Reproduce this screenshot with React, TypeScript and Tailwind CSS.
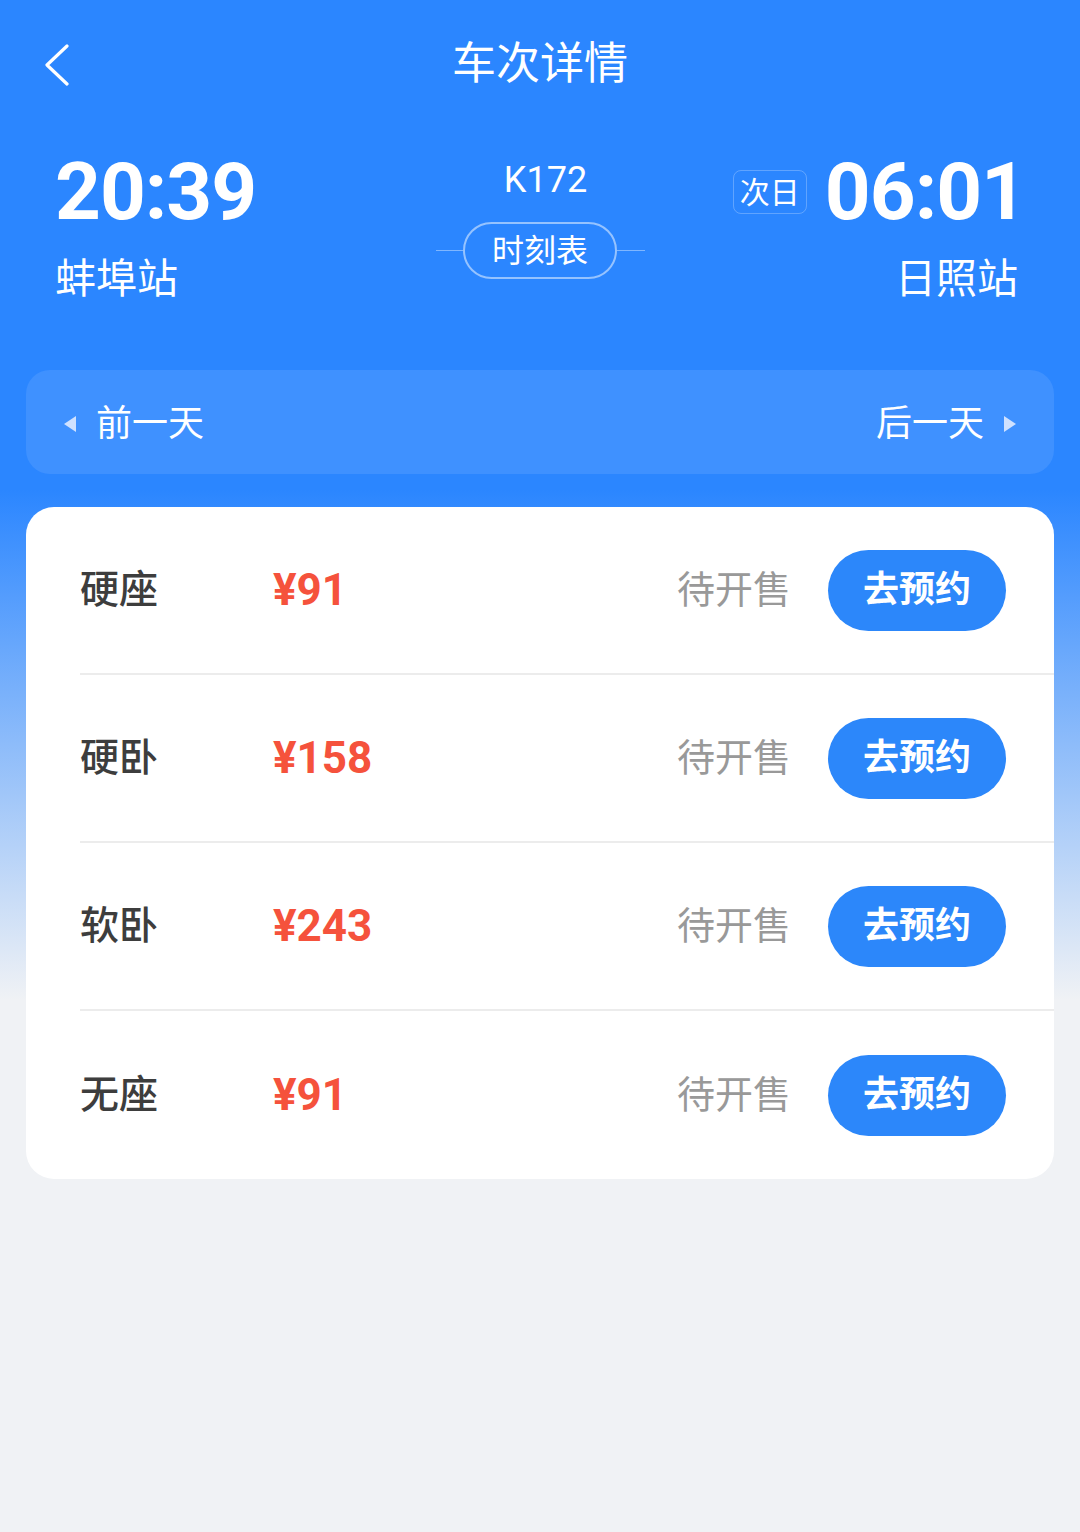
const seats = [
  { name: "硬座", price: "¥91" },
  { name: "硬卧", price: "¥158" },
  { name: "软卧", price: "¥243" },
  { name: "无座", price: "¥91" },
];

const cjk = "font-['Roboto','Noto_Sans_CJK_SC',sans-serif]";

export default function App() {
  return (
    <div
      className={`min-h-[1532px] w-[1080px] bg-[linear-gradient(180deg,#2b86ff_0px,#2b86ff_490px,#f0f2f5_1000px)] ${cjk}`}
    >
      {/* nav */}
      <div className="grid h-[128px] grid-cols-[1fr_auto_1fr] items-center px-[44px]">
        <svg width="26" height="42" viewBox="0 0 26 42" fill="none" className="mt-[1px]">
          <polyline points="23,2 3,21 23,40" stroke="white" strokeWidth="3.2" strokeLinecap="round" strokeLinejoin="round" />
        </svg>
        <h1 className="text-[44px] font-normal text-white">车次详情</h1>
        <div />
      </div>

      {/* times */}
      <div className="grid h-[242px] grid-cols-[1fr_auto_1fr] items-start pl-[55px] pr-[54px] pt-[24px] text-white">
        <div>
          <p className="text-[80px] font-bold leading-[80px] tracking-[-1px]">20:39</p>
          <p className="mt-[22px] text-[41px] leading-[50px]">蚌埠站</p>
        </div>
        <div className="flex flex-col items-center pt-[6px]">
          <p className="ml-[10px] text-[36px] leading-[44px]">K172</p>
          <div className="mt-[20px] flex items-center">
            <span className="h-px w-[27px] bg-white/40" />
            <span className="flex h-[57px] w-[154px] items-center justify-center rounded-full border-2 border-white/50 text-[32px]">
              时刻表
            </span>
            <span className="h-px w-[28px] bg-white/40" />
          </div>
        </div>
        <div className="flex flex-col items-end">
          <div className="flex items-center">
            <span className="mr-[18px] flex h-[44px] w-[74px] items-center justify-center rounded-[8px] border border-white/25 text-[30px]">
              次日
            </span>
            <p className="text-[80px] font-bold leading-[80px] tracking-[-1px]">06:01</p>
          </div>
          <p className="mt-[22px] mr-[8px] text-[41px] leading-[50px]">日照站</p>
        </div>
      </div>

      {/* day switch */}
      <div className="mx-[26px] flex h-[104px] items-center justify-between rounded-[24px] bg-[#3f91ff] px-[38px] pt-[4px] text-[36px] text-white">
        <div className="flex items-center gap-[20px]">
          <span className="h-0 w-0 border-y-[8px] border-r-[12px] border-y-transparent border-r-[#cfe1ff]" />
          <span>前一天</span>
        </div>
        <div className="flex items-center gap-[20px]">
          <span>后一天</span>
          <span className="h-0 w-0 border-y-[8px] border-l-[12px] border-y-transparent border-l-[#cfe1ff]" />
        </div>
      </div>

      {/* seats */}
      <div className="mx-[26px] mt-[33px] overflow-hidden rounded-[28px] bg-white">
        {seats.map((s, i) => (
          <div key={s.name} className="pl-[54px]">
            <div
              className={`flex h-[168px] items-center pr-[48px] ${i < seats.length - 1 ? "border-b-2 border-[#ececec]" : ""}`}
            >
              <span className="w-[193px] text-[39px] font-medium text-[#3d3d3d]">{s.name}</span>
              <span className="text-[44px] font-bold text-[#f5523c]">{s.price}</span>
              <span className="ml-auto text-[38px] text-[#999]">待开售</span>
              <button className="ml-[37px] flex h-[81px] w-[178px] items-center justify-center rounded-full bg-[#2c87fa] text-[36px] font-bold text-white">
                去预约
              </button>
            </div>
          </div>
        ))}
      </div>
    </div>
  );
}
